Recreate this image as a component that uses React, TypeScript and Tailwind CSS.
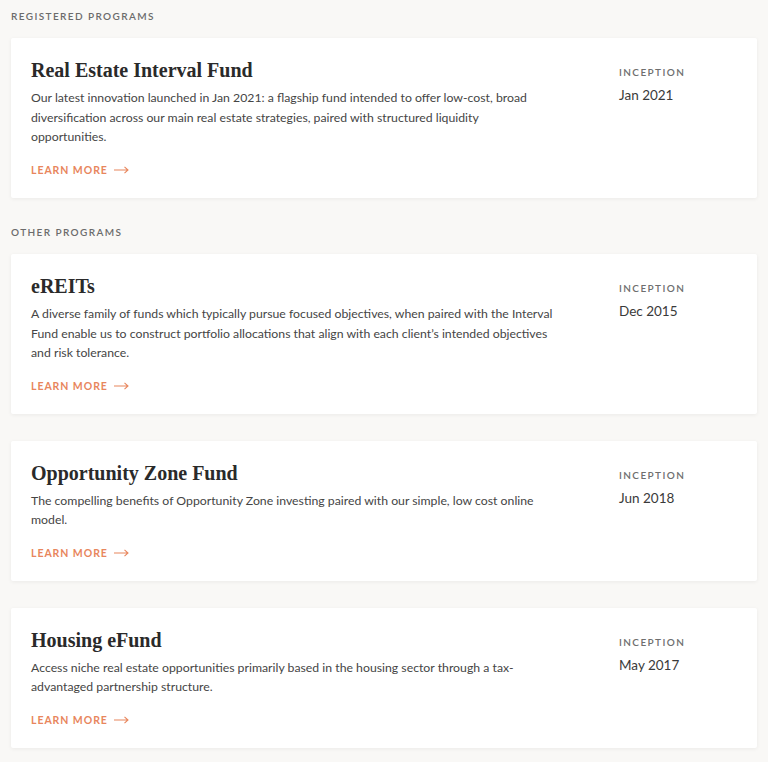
import React from "react";

type Program = { title: string; desc: string; date: string };

const registered: Program[] = [
  {
    title: "Real Estate Interval Fund",
    desc: "Our latest innovation launched in Jan 2021: a flagship fund intended to offer low-cost, broad diversification across our main real estate strategies, paired with structured liquidity opportunities.",
    date: "Jan 2021",
  },
];

const others: Program[] = [
  {
    title: "eREITs",
    desc: "A diverse family of funds which typically pursue focused objectives, when paired with the Interval Fund enable us to construct portfolio allocations that align with each client\u2019s intended objectives and risk tolerance.",
    date: "Dec 2015",
  },
  {
    title: "Opportunity Zone Fund",
    desc: "The compelling benefits of Opportunity Zone investing paired with our simple, low cost online model.",
    date: "Jun 2018",
  },
  {
    title: "Housing eFund",
    desc: "Access niche real estate opportunities primarily based in the housing sector through a tax-advantaged partnership structure.",
    date: "May 2017",
  },
];

function Card({ p }: { p: Program }) {
  return (
    <div className="flex bg-white shadow-[0_1px_4px_rgba(0,0,0,0.06)] rounded-[2px] pl-5 pt-[18px] pb-[21.5px]">
      <div className="w-[524px]">
        <h2 className="font-['Liberation_Serif',serif] font-bold text-[20px] leading-[28px] text-[#2a2a2a]">
          {p.title}
        </h2>
        <p className="mt-1 font-['Lato',sans-serif] text-[12.28px] leading-[19.5px] text-[#454545]">
          {p.desc}
        </p>
        <div className="mt-4 flex items-center gap-[6px] font-['Lato',sans-serif] text-[10.5px] leading-[14px] font-bold tracking-[0.09em] text-[#e8865d]">
          <span>LEARN MORE</span>
          <svg width="15" height="8" viewBox="0 0 15 8" fill="none" stroke="#e8865d" strokeWidth="1.1">
            <path d="M0 4h14M10.5 0.8L14 4l-3.5 3.2" />
          </svg>
        </div>
      </div>
      <div className="ml-[64px] pt-[9px]">
        <div className="font-['Lato',sans-serif] text-[10px] leading-[14px] font-semibold tracking-[0.14em] text-[#6e6e6e]">
          INCEPTION
        </div>
        <div className="mt-[7px] font-['Lato',sans-serif] text-[13.5px] leading-[18px] text-[#3a3a3a]">
          {p.date}
        </div>
      </div>
    </div>
  );
}

function Label({ children }: { children: React.ReactNode }) {
  return (
    <div className="px-[11px] font-['Lato',sans-serif] text-[10px] leading-[14px] font-semibold tracking-[0.14em] text-[#6b6b6b]">
      {children}
    </div>
  );
}

export default function App() {
  return (
    <div className="min-h-[762px] bg-[#f9f8f6] pt-[9px] pb-[14px]">
      <Label>REGISTERED PROGRAMS</Label>
      <div className="mx-[11px] mt-[15px]">
        <Card p={registered[0]} />
      </div>
      <div className="mt-[27px]">
        <Label>OTHER PROGRAMS</Label>
      </div>
      <div className="mx-[11px] mt-[15px] flex flex-col gap-[26.5px]">
        {others.map((p) => (
          <Card key={p.title} p={p} />
        ))}
      </div>
    </div>
  );
}
